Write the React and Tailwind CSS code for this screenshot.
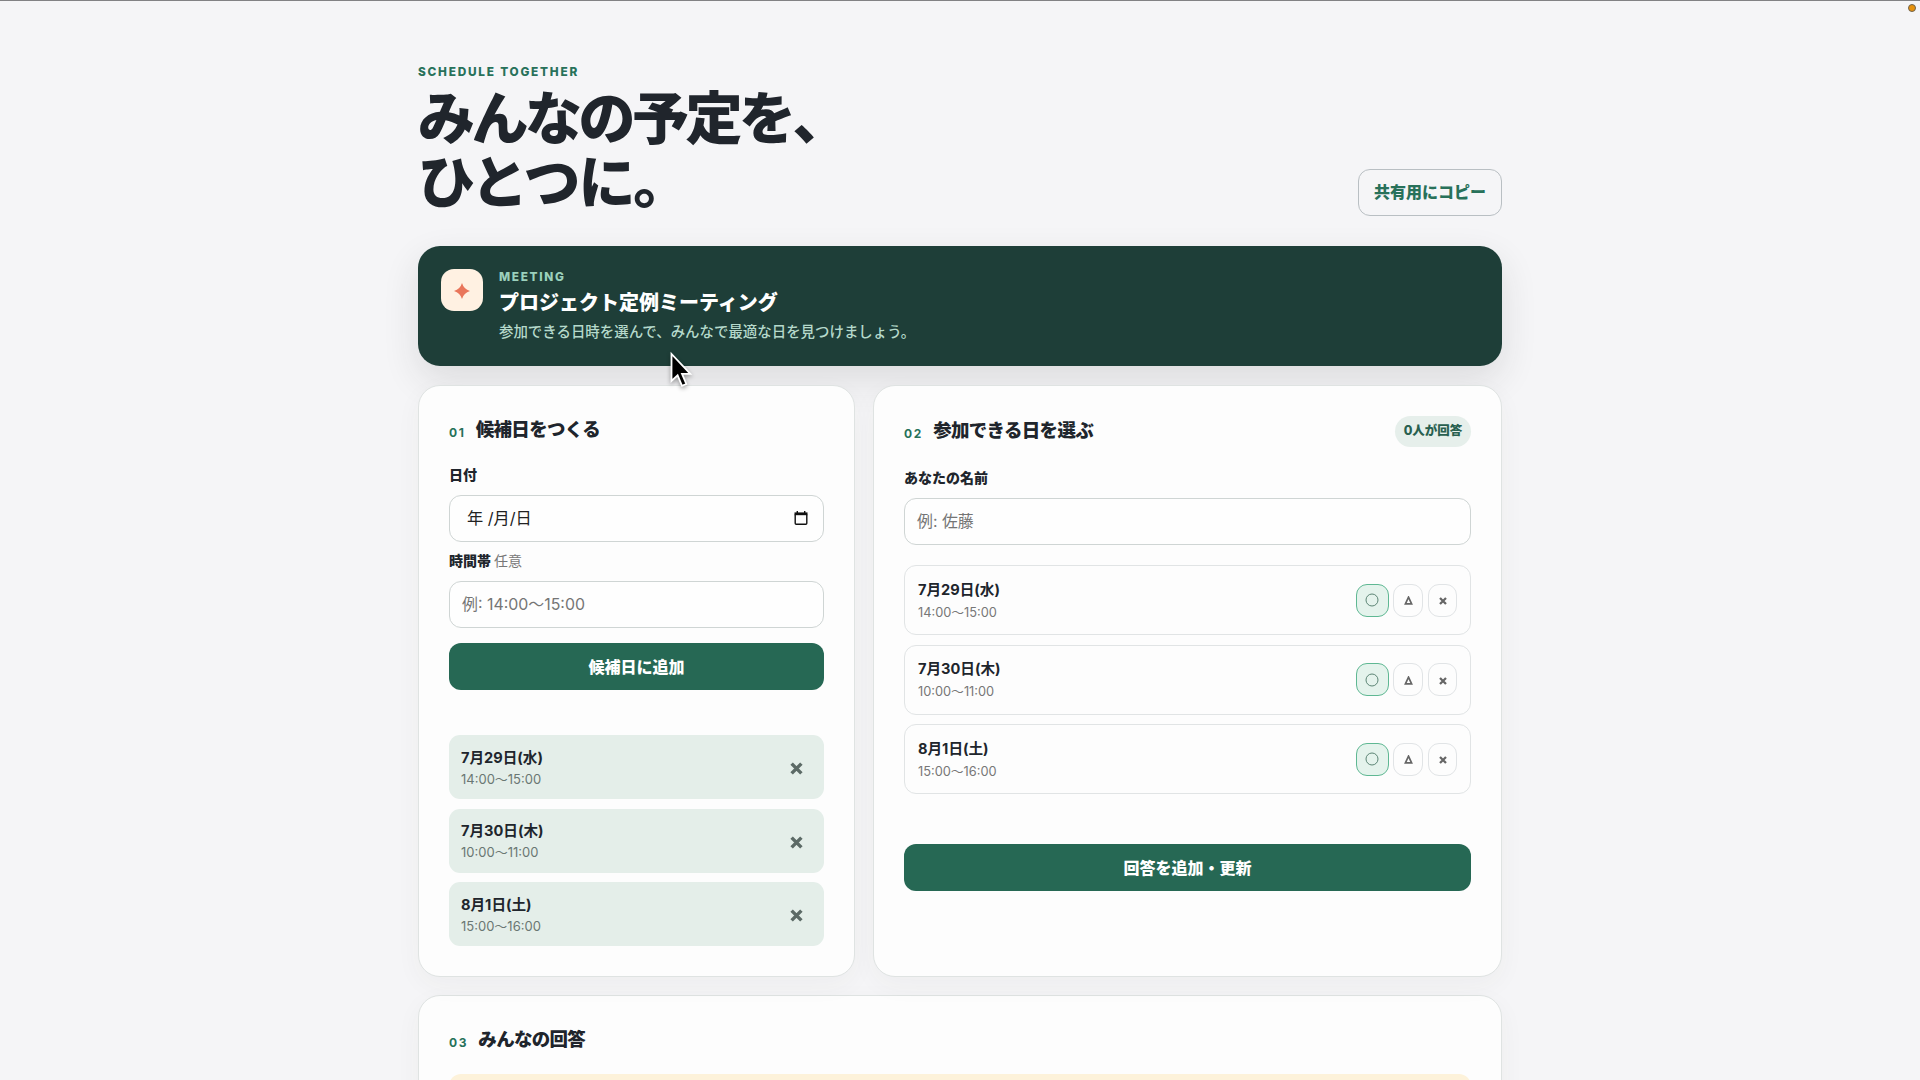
const slots = [
  { date: "7月29日(水)", time: "14:00〜15:00" },
  { date: "7月30日(木)", time: "10:00〜11:00" },
  { date: "8月1日(土)", time: "15:00〜16:00" },
];

function Card({ className = "", children }) {
  return (
    <section
      className={`rounded-[22px] border border-[#dfe3e2] bg-[#fdfdfd] px-[30px] shadow-[0_8px_26px_rgba(60,60,40,0.045)] ${className}`}
    >
      {children}
    </section>
  );
}

function Heading({ number, children }) {
  return (
    <h2 className="flex items-baseline gap-[10px] text-[18.5px] font-extrabold leading-[28px] tracking-[-0.7px] text-[#20252c]">
      <span className="relative top-px text-[12px] font-bold tracking-[1.75px] text-[#28715a]">{number}</span>
      {children}
    </h2>
  );
}

function Label({ children, className = "" }) {
  return <div className={`text-[14px] font-extrabold leading-[20px] text-[#20252c] ${className}`}>{children}</div>;
}

function Field({ children, color = "text-[#757575]", className = "" }) {
  return (
    <div
      className={`flex h-[47px] items-center rounded-[12px] border border-[#cfd5d4] bg-[#fefefe] pl-[12px] text-[15.9px] ${color} ${className}`}
    >
      {children}
    </div>
  );
}

function PrimaryButton({ children, className = "" }) {
  return (
    <button
      className={`flex h-[47px] w-full items-center justify-center rounded-[12px] bg-[#266854] text-[16px] font-black text-white ${className}`}
    >
      {children}
    </button>
  );
}

function SlotText({ slot, gray }) {
  return (
    <div className="pt-[2px]">
      <div className="text-[14.6px] font-bold leading-[22px] text-[#20252c]">{slot.date}</div>
      <div className={`leading-[22px] ${gray}`}>{slot.time}</div>
    </div>
  );
}

function Cross({ size, width, color }) {
  return (
    <svg width={size} height={size} viewBox="0 0 12 12" fill="none" stroke={color} strokeWidth={width}>
      <path d="M1.5 1.5L10.5 10.5M10.5 1.5L1.5 10.5" />
    </svg>
  );
}

function Answers() {
  return (
    <div className="flex items-center">
      <button className="flex h-[33px] w-[33px] items-center justify-center rounded-[11px] border border-[#5fb893] bg-[#e4f3ec]">
        <svg width="14" height="14" viewBox="0 0 14 14" fill="none" stroke="#5c8575" className="-ml-px">
          <circle cx="7" cy="7" r="6" />
        </svg>
      </button>
      <button className="ml-[4px] flex h-[33px] w-[30px] items-center justify-center rounded-[11px] border border-[#e1e4e6]">
        <svg width="9" height="9" viewBox="0 0 9 9" fill="none" stroke="#666" strokeWidth="1.7" className="mt-px">
          <path d="M4.5 1.2L7.6 7.8H1.4Z" />
        </svg>
      </button>
      <button className="ml-[5px] flex h-[33px] w-[29px] items-center justify-center rounded-[11px] border border-[#e1e4e6]">
        <span className="mt-[2px]">
          <Cross size={8} width={3.4} color="#666" />
        </span>
      </button>
    </div>
  );
}

export default function App() {
  return (
    <div className="relative h-[1080px] w-full overflow-hidden border-t border-[#828284] bg-[#f5f5f7] font-[Inter,'Noto_Sans_CJK_JP',sans-serif]">
      <span className="absolute right-[4px] top-[3px] h-[8px] w-[8px] rounded-full border border-[#6f6450] bg-[#e8920c]" />

      <main className="mx-auto w-[1084px] pt-[62px]">
        <header className="flex h-[153px] items-end justify-between">
          <div className="h-full">
            <p className="text-[11.8px] font-extrabold leading-[18px] tracking-[1.78px] text-[#28715a]">SCHEDULE TOGETHER</p>
            <h1 className="mt-[6px] text-[57px] font-extrabold leading-[64px] tracking-[-3.5px] text-[#20252c]">
              みんなの予定を、
              <br />
              <span className="tracking-[-2.2px]">ひとつに。</span>
            </h1>
          </div>
          <button className="flex h-[47px] w-[144px] items-center justify-center rounded-[12px] border border-[#b9bfc3] pb-px text-[16px] font-extrabold text-[#28715a]">
            共有用にコピー
          </button>
        </header>

        <section className="mt-[30px] flex h-[120px] rounded-[22px] bg-[#1e3e38] pl-[23px] pt-[23px] shadow-[0_14px_36px_rgba(40,40,40,0.12)]">
          <div className="flex h-[42px] w-[42px] items-center justify-center rounded-[13px] bg-[#fff1e2]">
            <svg width="16" height="16" viewBox="0 0 16 16" fill="#e9765b" className="mt-px">
              <path d="M8 0Q9.8 6.2 16 8Q9.8 9.8 8 16Q6.2 9.8 0 8Q6.2 6.2 8 0Z" />
            </svg>
          </div>
          <div className="ml-[16px]">
            <p className="text-[11.8px] font-extrabold leading-[16px] tracking-[1.7px] text-[#9bd0bc]">MEETING</p>
            <h2 className="mt-[2px] text-[20px] font-extrabold leading-[32px] text-white">プロジェクト定例ミーティング</h2>
            <p className="-mt-px text-[14.45px] font-medium leading-[28px] text-[#b5d9cb]">
              参加できる日時を選んで、みんなで最適な日を見つけましょう。
            </p>
          </div>
        </section>

        <div className="mt-[19px] flex gap-[18px]">
          <Card className="h-[592px] w-[437px] pt-[29px]">
            <Heading number="01">候補日をつくる</Heading>
            <Label className="mt-[19px]">日付</Label>
            <Field className="mt-[10px] justify-between pr-[15px]" color="text-[#222]">
              <span className="pl-[5px] text-[16.2px]">年 /月/日</span>
              <svg width="14" height="14" viewBox="0 0 14 14" fill="none" stroke="#111" className="-mt-px">
                <path d="M1.2 3.4V12.2Q1.2 13.2 2.2 13.2H11.8Q12.8 13.2 12.8 12.2V3.4" strokeWidth="1.4" />
                <path d="M0.5 2.8H13.5" strokeWidth="2.8" />
                <path d="M3.3 0V2M10.7 0V2" strokeWidth="1.4" />
              </svg>
            </Field>
            <Label className="mt-[9px]">
              時間帯 <span className="font-normal text-[#777]">任意</span>
            </Label>
            <Field className="mt-[10px]">例: 14:00〜15:00</Field>
            <PrimaryButton className="mt-[15px]">候補日に追加</PrimaryButton>
            <ul className="mt-[45px] flex flex-col gap-[9.5px]">
              {slots.map((slot) => (
                <li
                  key={slot.date}
                  className="flex h-[64px] items-center justify-between rounded-[11px] bg-[#e4eee9] pl-[12px] pr-[21px]"
                >
                  <SlotText slot={slot} gray="-mt-px text-[13px] text-[#6a7773]" />
                  <button className="pt-[3px]">
                    <Cross size={13} width={3.2} color="#5c6a66" />
                  </button>
                </li>
              ))}
            </ul>
          </Card>

          <Card className="h-[592px] w-[629px] pt-[29px]">
            <div className="flex h-[32px] items-center justify-between">
              <Heading number="02">参加できる日を選ぶ</Heading>
              <span className="flex h-[31px] w-[76px] items-center justify-center rounded-full bg-[#e6efeb] text-[12.5px] font-extrabold text-[#28604f]">
                0人が回答
              </span>
            </div>
            <Label className="mt-[21px]">あなたの名前</Label>
            <Field className="mt-[10px]">例: 佐藤</Field>
            <ul className="mt-[20px] flex flex-col gap-[9.5px]">
              {slots.map((slot) => (
                <li
                  key={slot.date}
                  className="flex h-[70px] items-center justify-between rounded-[12px] border border-[#e1e4e5] pl-[13px] pr-[13px]"
                >
                  <SlotText slot={slot} gray="pt-px text-[12.8px] text-[#777]" />
                  <Answers />
                </li>
              ))}
            </ul>
            <PrimaryButton className="mt-[50px]">回答を追加・更新</PrimaryButton>
          </Card>
        </div>

        <Card className="mt-[18px] h-[300px] pt-[29px]">
          <Heading number="03">みんなの回答</Heading>
          <div className="mt-[18px] h-[80px] rounded-[12px] bg-[#fdf2da]" />
        </Card>
      </main>

      <svg
        width="26"
        height="38"
        viewBox="0 0 26 38"
        className="absolute left-[669px] top-[350px] drop-shadow-[0_2px_2px_rgba(0,0,0,0.35)]"
      >
        <path
          d="M2.5 3V30L8.6 24.4L13 34.8L17.3 33L13 22.8H21.3Z"
          fill="#000"
          stroke="#fff"
          strokeWidth="1.8"
          strokeLinejoin="miter"
        />
      </svg>
    </div>
  );
}
